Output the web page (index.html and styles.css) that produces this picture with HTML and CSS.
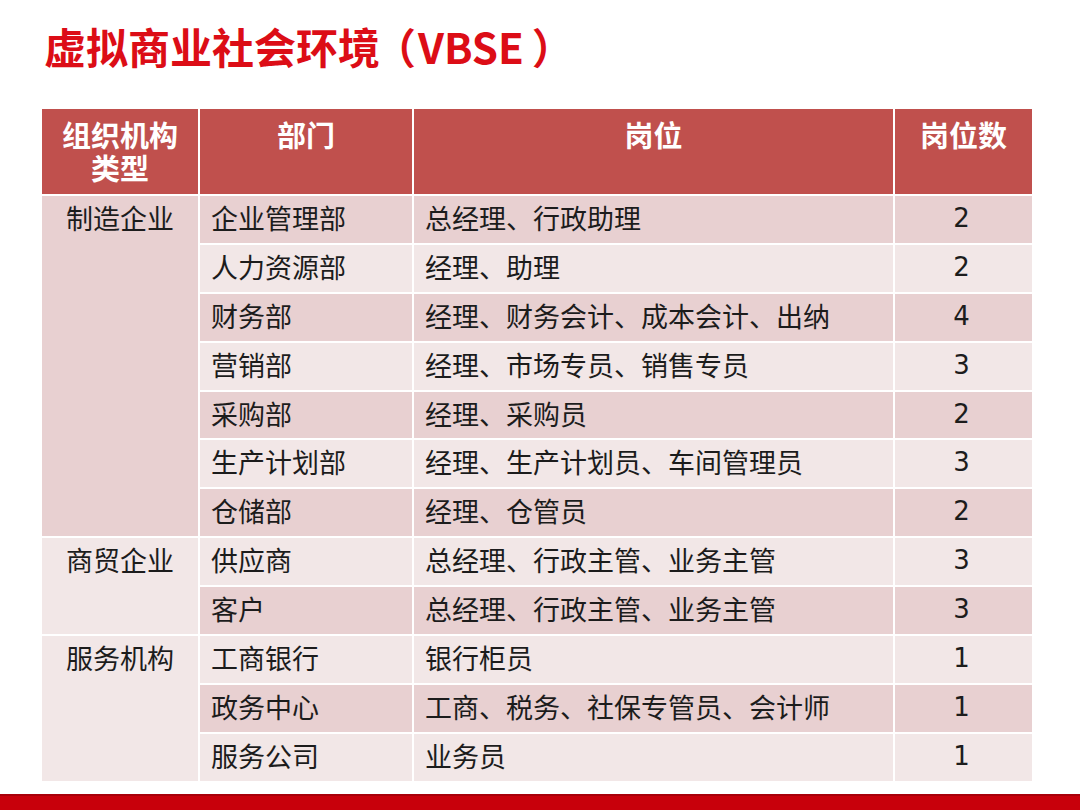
FILE: index.html
```html
<!DOCTYPE html>
<html lang="zh-CN">
<head>
<meta charset="utf-8">
<title>虚拟商业社会环境（VBSE）</title>
<link rel="stylesheet" href="styles.css">
</head>
<body>
<div class="slide">
  <h1 class="title">虚拟商业社会环境<span class="lp">（</span>VBSE<span class="rp">）</span></h1>
  <table class="grid">
    <colgroup>
      <col class="c-type">
      <col class="c-dept">
      <col class="c-post">
      <col class="c-num">
    </colgroup>
    <thead>
      <tr>
        <th><span class="hl">组织机构</span><span class="hl">类型</span></th>
        <th>部门</th>
        <th>岗位</th>
        <th>岗位数</th>
      </tr>
    </thead>
    <tbody>
      <tr class="dark">
        <td class="type dark" rowspan="7">制造企业</td>
        <td>企业管理部</td><td>总经理、行政助理</td><td class="num">2</td>
      </tr>
      <tr class="light">
        <td>人力资源部</td><td>经理、助理</td><td class="num">2</td>
      </tr>
      <tr class="dark">
        <td>财务部</td><td>经理、财务会计、成本会计、出纳</td><td class="num">4</td>
      </tr>
      <tr class="light">
        <td>营销部</td><td>经理、市场专员、销售专员</td><td class="num">3</td>
      </tr>
      <tr class="dark">
        <td>采购部</td><td>经理、采购员</td><td class="num">2</td>
      </tr>
      <tr class="light">
        <td>生产计划部</td><td>经理、生产计划员、车间管理员</td><td class="num">3</td>
      </tr>
      <tr class="dark">
        <td>仓储部</td><td>经理、仓管员</td><td class="num">2</td>
      </tr>
      <tr class="light">
        <td class="type light" rowspan="2">商贸企业</td>
        <td>供应商</td><td>总经理、行政主管、业务主管</td><td class="num">3</td>
      </tr>
      <tr class="dark">
        <td>客户</td><td>总经理、行政主管、业务主管</td><td class="num">3</td>
      </tr>
      <tr class="light">
        <td class="type light" rowspan="3">服务机构</td>
        <td>工商银行</td><td>银行柜员</td><td class="num">1</td>
      </tr>
      <tr class="dark">
        <td>政务中心</td><td>工商、税务、社保专管员、会计师</td><td class="num">1</td>
      </tr>
      <tr class="light">
        <td>服务公司</td><td>业务员</td><td class="num">1</td>
      </tr>
    </tbody>
  </table>
  <div class="footer-bar"></div>
</div>
</body>
</html>
```

FILE: styles.css
```css
* { box-sizing: border-box; }

html, body {
  margin: 0;
  padding: 0;
  background: #ffffff;
}

body {
  font-family: "Noto Sans CJK SC", "Noto Sans", sans-serif;
  color: #1c1c1c;
}

.slide {
  width: 1080px;
  height: 810px;
  overflow: hidden;
  display: flex;
  flex-direction: column;
}

.title {
  margin: 21px 0 0 44px;
  font-size: 42px;
  line-height: 50px;
  font-weight: 700;
  color: #dc0d16;
  white-space: nowrap;
}

.lp,
.rp {
  display: inline-block;
  overflow: visible;
  white-space: nowrap;
}

.lp {
  width: 44px;
  margin-left: -6px;
  text-align: left;
}

.rp {
  width: 38px;
  text-align: left;
  padding-left: 8px;
}

.grid {
  margin: 36px 0 0 40px;
  border-collapse: separate;
  border-spacing: 2px;
  table-layout: fixed;
  width: 994px;
}

.c-type { width: 156px; }
.c-dept { width: 212px; }
.c-post { width: 479px; }
.c-num  { width: 137px; }

.grid th {
  background: #c0504d;
  color: #ffffff;
  font-size: 29px;
  font-weight: 700;
  line-height: 33px;
  height: 85px;
  padding: 9px 4px 0;
  vertical-align: top;
  text-align: center;
}

.hl {
  display: block;
  height: 33px;
  overflow: visible;
}

.grid tbody tr { height: 46.9px; }

.grid td {
  font-size: 27px;
  line-height: 36px;
  height: 46.9px;
  padding: 4px 10px 0 11px;
  vertical-align: top;
  white-space: nowrap;
}

tr.dark td { background: #e8d0d1; }
tr.light td { background: #f2e7e7; }

.grid td.type {
  text-align: center;
  padding-left: 4px;
  padding-right: 4px;
}
.grid td.type.dark { background: #e8d0d1; }
.grid td.type.light { background: #f2e7e7; }

.grid td.num {
  text-align: center;
  font-family: "DejaVu Sans", "Noto Sans", sans-serif;
  font-size: 26px;
  padding-left: 0;
  padding-right: 4px;
}

.footer-bar {
  margin-top: auto;
  height: 16px;
  background: #c8000b;
  border-top: 2px solid #a8000a;
}
```
